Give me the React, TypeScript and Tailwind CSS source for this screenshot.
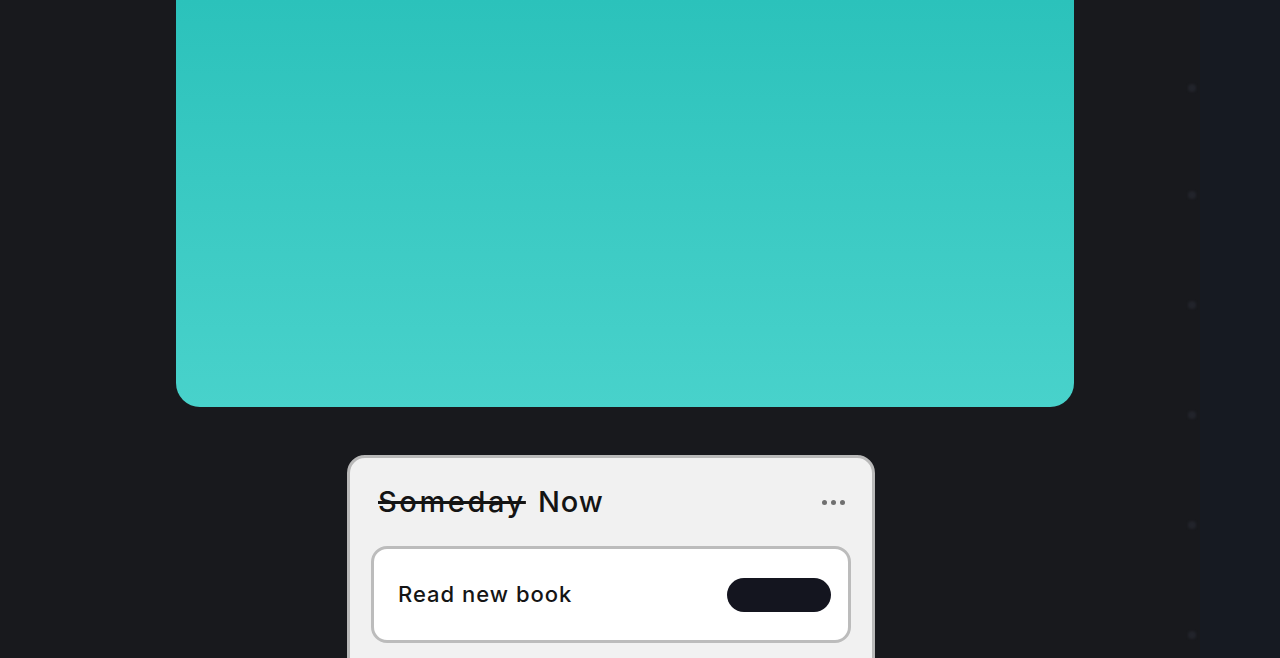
const railDots = [88, 195, 305, 415, 525, 635];

const TaskCard = () => {
  return (
    <div className="w-[528px] h-[240px] shrink-0 rounded-[18px] border-[3px] border-[#b9b9b9] bg-[#f1f1f1] px-[21px] pt-[24px]">
      <div className="flex items-center justify-between pl-[7px] pr-[6px]">
        <p className="text-[29px] font-medium leading-[40px] text-[#141414]">
          <span className="tracking-[2.6px] line-through decoration-[2.5px]">Someday</span>
          <span className="ml-[12px] tracking-[1px]">Now</span>
        </p>
        <div className="flex gap-[4px]">
          <div className="h-[5px] w-[5px] rounded-full bg-[#707070]" />
          <div className="h-[5px] w-[5px] rounded-full bg-[#707070]" />
          <div className="h-[5px] w-[5px] rounded-full bg-[#707070]" />
        </div>
      </div>
      <div className="mt-[24px] flex h-[97px] items-center justify-between rounded-[16px] border-[3px] border-[#bcbcbc] bg-white pl-[24px] pr-[17px]">
        <p className="text-[22px] font-medium tracking-[1px] text-[#151515]">Read new book</p>
        <div className="h-[34px] w-[104px] rounded-full bg-[#14151f]" />
      </div>
    </div>
  );
};

const App = () => {
  return (
    <div
      className="relative flex h-[658px] w-[1280px] overflow-hidden bg-[#18191d]"
      style={{ fontFamily: "Inter, 'Noto Sans', sans-serif" }}
    >
      <div className="flex flex-1 flex-col items-start pl-[176px]">
        <div className="h-[407px] w-[898px] shrink-0 rounded-b-[24px] bg-gradient-to-b from-[#2bc2bb] to-[#48d2cb]" />
        <div className="mt-[48px] ml-[171px]">
          <TaskCard />
        </div>
      </div>
      <div className="relative w-[80px] bg-[#161a22]">
        {railDots.map((y) => (
          <div
            key={y}
            className="absolute left-[-12px] h-[8px] w-[8px] rounded-full bg-[#22242b] blur-[1px]"
            style={{ top: y - 4 }}
          />
        ))}
      </div>
    </div>
  );
};

export default App;
